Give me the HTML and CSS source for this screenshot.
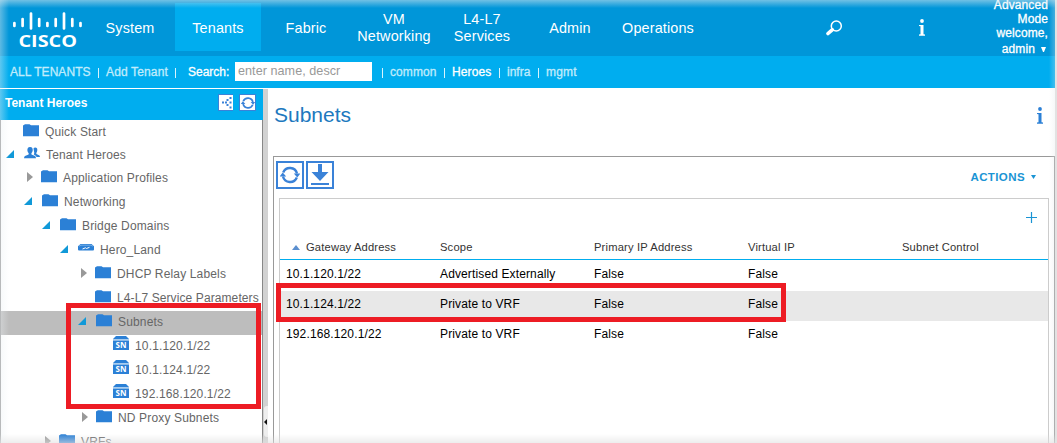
FILE: index.html
```html
<!DOCTYPE html>
<html lang="en">
<head>
<meta charset="utf-8">
<title>Subnets</title>
<link rel="stylesheet" href="styles.css">
</head>
<body>
<svg class="defs" width="0" height="0">
  <symbol id="folder" viewBox="0 0 16 13"><path d="M0 2V1.500L2 .3H6.500L8 1.300H16V12.300H0Z" fill="#2b80d6"/></symbol>
  <symbol id="open" viewBox="0 0 8 8"><path d="M8 0V8H0Z" fill="#1199d8"/></symbol>
  <symbol id="closed" viewBox="0 0 6 10"><path d="M0 0L6 5L0 10Z" fill="#999"/></symbol>
  <symbol id="people" viewBox="0 0 16 12"><g fill="#2b80d6"><path d="M9.500 1.500Q10 .5 11.300.5 13.500.5 13.300 3.200 13.200 5 12.300 6L12.400 7 15.500 8.500 16 10H12.500L12 9 9.800 7.600 10.300 6Z"/><path d="M6 0C8.300 0 8.900 1.600 8.700 3.500Q8.500 5 7.400 6.200L7.500 7.400 11 9Q11.800 9.500 12 11.200H0Q.2 9.500 1 9L4.600 7.400 4.700 6.200Q3.500 5 3.400 3.500C3.200 1.600 4 0 6 0Z"/></g></symbol>
  <symbol id="bridge" viewBox="0 0 16 7"><path d="M2.500 0H13.500L16 2.200V5.500Q16 6.500 15 6.500H1Q0 6.500 0 5.500V2.200Z" fill="#2b80d6"/><path d="M1 2.200L3 1.200H13L15 2.200" fill="none" stroke="#a9cdef" stroke-width=".6"/><path d="M4.500 5L7.500 3.800 8.500 4.500 11.500 3.300" fill="none" stroke="#fff" stroke-width="1"/></symbol>
  <symbol id="sn" viewBox="0 0 16 14"><path d="M3 0H13L16 3H0Z" fill="#2b80d6"/><path d="M0 3H16V4.600H0Z" fill="#a9cdef"/><path d="M0 4.600H16V14H0Z" fill="#2b80d6"/><text x="8" y="12.300" text-anchor="middle" class="sn-text">SN</text></symbol>
  <symbol id="refresh" viewBox="0 0 20 20"><path d="M3.200 7.500A7.300 7.300 0 0 1 17 8.500M16.800 12.500A7.300 7.300 0 0 1 3 11.500" fill="none" stroke="#3a82d8" stroke-width="2.400"/><path d="M13.800 8.600H20.200L17.300 12.600ZM-.2 11.400H6.200L2.700 7.400Z" fill="#3a82d8"/></symbol>
  <symbol id="info" viewBox="0 0 6 17"><circle cx="3" cy="2" r="1.900"/><path d="M0 6H4.500V15.200L6 15.600V16.700H0V15.600L1.500 15.200V7.300L0 7Z"/></symbol>
</svg>

<header class="topbar">
  <div class="logo">
    <svg width="86" height="56">
      <g stroke="#fff" stroke-width="2.700" stroke-linecap="round">
        <path d="M14.400 23V26M22.600 19V26M31 13.500V28.500M39.200 19V26M47.400 23V26M55.700 19V26M64 13.500V28.500M72.300 19V26M80.500 23V26"/>
      </g>
      <text x="18.500" y="46.500" textLength="58.500" lengthAdjust="spacingAndGlyphs" class="logo-text">CISCO</text>
    </svg>
  </div>
  <nav class="nav">
    <a>System</a><a class="active">Tenants</a><a>Fabric</a><a>VM<br>Networking</a><a>L4-L7<br>Services</a><a>Admin</a><a>Operations</a>
  </nav>
  <svg class="search-icon" width="17" height="17"><circle cx="10.300" cy="6" r="5" fill="none" stroke="#fff" stroke-width="1.500"/><path d="M6.200 9.800L2 13.500" stroke="#fff" stroke-width="3.600" stroke-linecap="round"/></svg>
  <svg class="top-info" width="6" height="17" fill="#fff"><use href="#info"/></svg>
  <div class="welcome"><div>Advanced</div><div>Mode</div><div>welcome,</div><div class="user">admin <svg width="5" height="5"><path d="M0 0H5L3 5H2Z" fill="#fff"/></svg></div></div>
</header>

<div class="subbar">
  <span class="all">ALL TENANTS</span><i></i><span class="add">Add Tenant</span><i></i>
  <span class="search-label">Search:</span><span class="field">enter name, descr</span>
  <i class="after-field"></i><span class="common">common</span><i></i><span class="heroes">Heroes</span><i></i><span class="infra">infra</span><i></i><span class="mgmt">mgmt</span>
</div>

<div class="body">
  <aside class="side">
    <div class="side-head"><b>Tenant Heroes</b>
      <span class="mini share"><svg width="13" height="15" fill="#3a82d8"><path d="M2 6.500h2v2H2zM5 6.500h2v2H5zM6.500 4h2v2h-2zM6.500 9h2v2h-2zM9.500 2h2v2h-2zM9.500 6.500h2v2h-2zM9.500 11.500h2v2h-2z"/></svg></span>
      <span class="mini"><svg width="14" height="14"><use href="#refresh"/></svg></span>
    </div>
    <div class="tree">
      <div class="row short d1"><span class="arrow"></span><svg class="ico folder"><use href="#folder"/></svg><span>Quick Start</span></div>
      <div class="row short d2"><span class="arrow"><svg class="open"><use href="#open"/></svg></span><svg class="ico people"><use href="#people"/></svg><span>Tenant Heroes</span></div>
      <div class="row d3"><span class="arrow"><svg class="closed"><use href="#closed"/></svg></span><svg class="ico folder"><use href="#folder"/></svg><span>Application Profiles</span></div>
      <div class="row d4"><span class="arrow"><svg class="open"><use href="#open"/></svg></span><svg class="ico folder"><use href="#folder"/></svg><span>Networking</span></div>
      <div class="row d6"><span class="arrow"><svg class="open"><use href="#open"/></svg></span><svg class="ico folder"><use href="#folder"/></svg><span>Bridge Domains</span></div>
      <div class="row d7"><span class="arrow"><svg class="open"><use href="#open"/></svg></span><svg class="ico bridge"><use href="#bridge"/></svg><span>Hero_Land</span></div>
      <div class="row d8"><span class="arrow"><svg class="closed"><use href="#closed"/></svg></span><svg class="ico folder"><use href="#folder"/></svg><span>DHCP Relay Labels</span></div>
      <div class="row d8"><span class="arrow"></span><svg class="ico folder"><use href="#folder"/></svg><span class="tight">L4-L7 Service Parameters</span></div>
      <div class="row d9 selected"><span class="arrow"><svg class="open"><use href="#open"/></svg></span><svg class="ico folder"><use href="#folder"/></svg><span>Subnets</span></div>
      <div class="row d10"><span class="arrow"></span><svg class="ico sn"><use href="#sn"/></svg><span>10.1.120.1/22</span></div>
      <div class="row d10"><span class="arrow"></span><svg class="ico sn"><use href="#sn"/></svg><span>10.1.124.1/22</span></div>
      <div class="row d10"><span class="arrow"></span><svg class="ico sn"><use href="#sn"/></svg><span>192.168.120.1/22</span></div>
      <div class="row d9"><span class="arrow"><svg class="closed"><use href="#closed"/></svg></span><svg class="ico folder"><use href="#folder"/></svg><span>ND Proxy Subnets</span></div>
      <div class="row d5"><span class="arrow"><svg class="closed"><use href="#closed"/></svg></span><svg class="ico folder"><use href="#folder"/></svg><span>VRFs</span></div>
    </div>
  </aside>
  <div class="splitter"><div class="handle"><svg width="3" height="6"><path d="M3 0V6L0 3Z" fill="#111"/></svg></div></div>
  <main class="main">
    <div class="title"><h1>Subnets</h1><svg width="6" height="17" fill="#2b80d6"><use href="#info"/></svg></div>
    <section class="panel">
      <div class="toolbar">
        <span class="btn"><svg width="20" height="20"><use href="#refresh"/></svg></span>
        <span class="btn"><svg width="20" height="22" fill="#3a82d8"><path d="M8 0h4v8h6.500L10 17 1.500 8H8zM1 19h18v2H1z"/></svg></span>
        <span class="actions">ACTIONS <svg width="5" height="4"><path d="M0 0H5L2.500 4Z" fill="#1a94d4"/></svg></span>
      </div>
      <div class="grid">
        <div class="plus"><svg width="12" height="12"><path d="M6.500 0V11M1 5.500H12" stroke="#1a94d4" stroke-width="1.200"/></svg></div>
        <div class="cells head"><span><svg width="8" height="5"><path d="M0 5L4 0L8 5Z" fill="#5b8fcf"/></svg>Gateway Address</span><span>Scope</span><span>Primary IP Address</span><span>Virtual IP</span><span>Subnet Control</span></div>
        <div class="cells"><span>10.1.120.1/22</span><span>Advertised Externally</span><span>False</span><span>False</span></div>
        <div class="cells hover"><span>10.1.124.1/22</span><span>Private to VRF</span><span>False</span><span>False</span></div>
        <div class="cells"><span>192.168.120.1/22</span><span>Private to VRF</span><span>False</span><span>False</span></div>
      </div>
    </section>
  </main>
</div>
<div class="mark mark-tree"></div>
<div class="mark mark-row"></div>
<div class="edge"></div>
</body>
</html>
```
FILE: styles.css
```css
* { box-sizing: border-box; }
body {
  margin: 0;
  width: 1057px;
  height: 443px;
  overflow: hidden;
  position: relative;
  background: #fff;
  font: 12px/14px "Liberation Sans", Arial, sans-serif;
  color: #666;
  display: flex;
  flex-direction: column;
}
svg { display: block; flex: none; }
.defs { position: absolute; }

/* Top bar */
.topbar { height: 56px; flex: none; width: 1055px; background: #0096d9; display: flex; color: #fff; }
.logo { width: 86px; }
.logo-text { font: bold 15.5px "Open Sans", sans-serif; fill: #fff; }
.nav { display: grid; grid-template-columns: repeat(7, 88px); height: 48px; margin-top: 3px; }
.nav a {
  margin: 0 1px;
  display: flex;
  align-items: center;
  justify-content: center;
  text-align: center;
  font-size: 14.4px;
  line-height: 17px;
  letter-spacing: .15px;
  padding-top: 2px;
}
.nav .active { background: #00adef; }
.search-icon { margin: 20px 0 0 124px; }
.top-info { margin: 19px 0 0 76px; }
.welcome { margin-left: auto; padding-right: 7px; margin-top: -2px; text-align: right; letter-spacing: .1px; -webkit-text-stroke: .3px #fff; }
.user { display: flex; align-items: center; justify-content: flex-end; gap: 6px; margin-top: 2px; padding-right: 2px; }

/* Tenant bar */
.subbar {
  height: 32px;
  flex: none;
  width: 1055px;
  background: #00adef;
  display: flex;
  align-items: center;
  padding-left: 10px;
  color: #c0ecfc;
  -webkit-text-stroke: .3px currentColor;
}
.subbar i { width: 1px; height: 10px; background: #d8f3fd; margin: 1px 7px 0 0; }
.all { width: 88px; letter-spacing: .05px; }
.add { width: 69px; letter-spacing: .15px; }
.search-label { width: 47px; margin-left: 5px; color: #fff; }
.field { width: 137px; height: 19px; margin-top: -1px; padding: 2px 3px; background: #fff; color: #999; font-size: 12.600px; line-height: 15px; letter-spacing: .05px; -webkit-text-stroke: 0; }
.subbar .after-field { margin-left: 10px; }
.common { width: 54px; letter-spacing: .1px; }
.heroes { width: 47px; color: #fff; letter-spacing: .1px; }
.infra { width: 31px; }
.mgmt { letter-spacing: .2px; }

.body { flex: 1; display: flex; min-height: 0; margin-top: 1px; width: 1055px; }

/* Navigation tree */
.side { width: 263px; flex: none; display: flex; flex-direction: column; }
.side-head { height: 31px; flex: none; background: #00adef; color: #fff; display: flex; align-items: center; padding: 0 7px 4px 5px; gap: 6px; }
.side-head b { flex: 1; }
.mini { width: 17px; height: 17px; background: #fff; border: 1px solid #3a82d8; display: flex; align-items: center; justify-content: center; }
.mini.share { width: 15px; border-right: 0; }
.tree { flex: 1; padding-top: 1px; border-left: 1px solid #999; border-right: 1px solid #888; overflow: hidden; }
.row { height: 24px; padding-top: 3px; display: flex; align-items: flex-start; line-height: 17px; letter-spacing: .15px; white-space: nowrap; }
.row.short { height: 23px; }
.tight { letter-spacing: .1px; }
.selected { background: #bdbdbd; }
.arrow { width: 18px; height: 15px; padding-top: 3px; flex: none; }
.open { width: 8px; height: 8px; }
.closed { width: 6px; height: 10px; margin: -1px 0 0 4px; }
.ico { width: 16px; margin-right: 6px; }
.folder { height: 13px; }
.people { height: 12px; }
.bridge { height: 7px; margin-top: 2px; }
.sn { height: 14px; margin-top: -2px; }
.sn-text { font: bold 8px "Open Sans", sans-serif; fill: #fff; }
.d1 { padding-left: 4px; }
.d2 { padding-left: 5px; }
.d3 { padding-left: 22px; }
.d4 { padding-left: 23px; }
.d5 { padding-left: 40px; }
.d6 { padding-left: 41px; }
.d7 { padding-left: 59px; }
.d8 { padding-left: 76px; }
.d9 { padding-left: 77px; }
.d10 { padding-left: 94px; }

.splitter { width: 5px; flex: none; background: #d2d2d2; padding-top: 317px; }
.handle { margin-left: 1px; width: 4px; height: 31px; background: #eee; border-radius: 3px 0 0 3px; display: flex; align-items: center; }

/* Content */
.main { flex: 1; min-width: 0; display: flex; flex-direction: column; padding-left: 5px; }
.title { height: 67px; display: flex; justify-content: space-between; padding: 14px 12px 0 1px; }
.title svg { margin-top: 4px; }
h1 { margin: 0; font-size: 21px; font-weight: 400; line-height: 24px; color: #2078be; }
.panel { flex: 1; border: 1px solid #999; border-bottom: 0; padding: 4px 5px 0 5px; display: flex; flex-direction: column; }
.toolbar { height: 37px; display: flex; gap: 2px; margin-left: -3px; }
.btn { width: 28px; height: 28px; border: 2px solid #3a82d8; display: flex; align-items: center; justify-content: center; }
.actions { margin-left: auto; padding-right: 13px; display: flex; align-items: center; height: 32px; gap: 6px; color: #1a94d4; letter-spacing: .4px; font-size: 11.500px; font-weight: 700; }
.grid { flex: 1; min-width: 0; border: 1px solid #ccc; border-bottom: 0; }
.plus { height: 36px; padding: 13px 11px 0 0; display: flex; justify-content: flex-end; }
.cells { display: grid; grid-template-columns: repeat(4, 154px) 1fr; height: 30px; padding: 5px 0 0 6px; color: #000; letter-spacing: .13px; line-height: 17px; white-space: nowrap; }
.head { height: 25px; align-items: start; margin: 0 0 6px; border-bottom: 1px solid #00adef; font-size: 11.200px; line-height: 14px; color: #333; letter-spacing: .16px; }
.head + .cells { height: 25px; padding-top: 0; }
.head span:first-child { display: flex; align-items: center; gap: 6px; padding-left: 6px; }
.hover { background: #e8e8e8; }

/* Callouts laid over the page */
.mark { position: absolute; border: 5px solid #ed1c24; }
.mark-tree { left: 66px; top: 303px; width: 195px; height: 106px; }
.mark-row { left: 276px; top: 283px; width: 510px; height: 39px; }

/* Faded window edge */
.edge {
  position: absolute;
  inset: 0;
  pointer-events: none;
  background:
    linear-gradient(to bottom, rgba(225,235,240,.5), rgba(225,235,240,0) 8px),
    linear-gradient(to right, rgba(235,240,243,.4), rgba(235,240,243,0) 9px),
    linear-gradient(to left, #e2e2e2 2px, rgba(225,230,233,.3) 2px, rgba(225,230,233,0) 8px),
    linear-gradient(to top, rgba(225,225,225,.6), rgba(225,225,225,0) 9px);
}
```
